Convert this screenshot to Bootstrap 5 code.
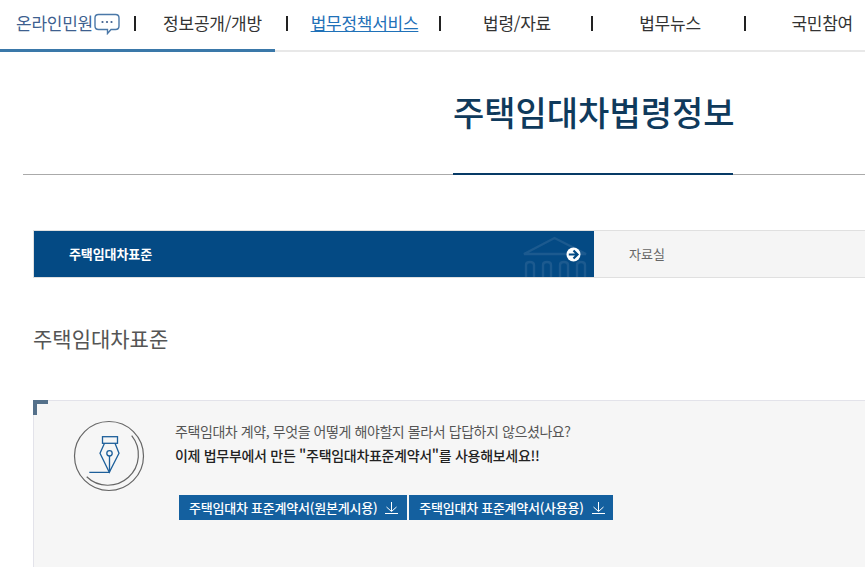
<!DOCTYPE html>
<html lang="ko">
<head>
<meta charset="utf-8">
<title>주택임대차법령정보</title>
<link href="https://cdn.jsdelivr.net/npm/bootstrap@5.3.0/dist/css/bootstrap.min.css" rel="stylesheet">
<style>
html,body{overflow:hidden;height:567px;background:#fff}
body{width:865px;font-family:"Noto Sans CJK KR","Liberation Sans",sans-serif;color:#333}
.gnav{height:52px;border-bottom:2px solid #e8e8e8;position:relative}
.gnav-list{height:46px;margin:0;padding:0;list-style:none}
.gnav-item{font-size:17px;line-height:24px;color:#333;text-decoration:none;white-space:nowrap;letter-spacing:-.25px}
.gnav-first{color:#3e5f8f;padding-left:16px;width:134px;gap:1px}
.gnav-sep{width:2px;height:15px;background:#222;flex:none}
.w-a{width:150px;justify-content:center;padding-left:3px}
.w-b{width:151px;justify-content:center;padding-left:2px}
.w-c{width:150px;justify-content:center;padding-left:2px}
.w-d{width:151px;justify-content:center;padding-left:3px}
.w-e{width:119px;justify-content:flex-end;padding-right:12px}
.gnav-on{color:#1f71b8;text-decoration:underline}
.gnav-bar{position:absolute;left:0;bottom:-2px;width:275px;height:3px;background:#3a78a9}
.title-wrap{margin-left:23px;height:123px;border-bottom:1px solid #aaa;position:relative}
.page-title{position:absolute;left:430px;top:0;width:280px;height:123px;margin:0;padding-top:36px;font-size:34px;line-height:48px;font-weight:500;color:#0f3a5c;white-space:nowrap;letter-spacing:0;border-bottom:2px solid #063a66;text-align:center}
.tab-row{margin:55px 0 0 33px;width:832px;height:48px;border-top:1px solid #e0e0e0;border-bottom:1px solid #e0e0e0;border-left:1px solid #e0e0e0}
.tab-on{width:560px;background:#044a84;color:#fff;font-size:13px;font-weight:700;padding-left:35px;position:relative;overflow:hidden;letter-spacing:-.1px}
.tab-off{flex:1;background:#f5f5f5;color:#666;font-size:13px;padding-left:35px}
.tab-bld{position:absolute;left:487px;top:4px}
.tab-arrow{position:absolute;left:532px;top:16px}
.sec-title{margin:45px 0 0 33px;font-size:21px;line-height:30px;font-weight:400;color:#555;letter-spacing:0}
.info-box{margin:47px 0 0 33px;width:832px;height:167px;background:#f6f6f6;border:1px solid #e3e3ea;border-right:0;border-bottom:0;position:relative;padding:19px 0 0 39px;gap:30px}
.box-corner{position:absolute;left:-1px;top:-1px;width:15px;height:15px;border-left:4px solid #54708a;border-top:4px solid #54708a}
.box-line1{font-size:14px;line-height:24px;color:#555;letter-spacing:-.42px;margin:0;white-space:nowrap}
.box-line2{font-size:14px;line-height:24px;color:#222;font-weight:500;letter-spacing:-.3px;margin:0;white-space:nowrap}
.dl-row{margin-top:28px;margin-left:4px;gap:2px}
.dl-btn{height:25px;background:#14609f;color:#fff;font-size:13px;border-radius:0;border:0;padding:0 9px 0 10px;gap:8px;letter-spacing:-.22px;white-space:nowrap;font-weight:500;text-decoration:none}
.dl-btn-short{padding-right:8px;letter-spacing:-.26px}
.text-col{margin-top:-1px}
</style>
</head>
<body>
<nav class="gnav">
<ul class="gnav-list d-flex align-items-center">
<li class="d-flex align-items-center"><a class="gnav-item gnav-first d-flex align-items-center" href="#">온라인민원<svg width="26" height="23" viewBox="0 0 26 23" fill="none"><path d="M4.500 2.500H21.500Q25 2.500 25 6V14Q25 17.500 21.500 17.500H17L13.500 21.500V17.500H4.500Q1 17.500 1 14V6Q1 2.500 4.500 2.500Z" stroke="#4a78a8" stroke-width="1.400"/><circle cx="8.500" cy="10" r="1.100" fill="#3e5f8f"/><circle cx="13" cy="10" r="1.100" fill="#3e5f8f"/><circle cx="17.500" cy="10" r="1.100" fill="#3e5f8f"/></svg></a></li>
<li class="gnav-sep"></li>
<li class="d-flex w-a"><a class="gnav-item" href="#">정보공개/개방</a></li>
<li class="gnav-sep"></li>
<li class="d-flex w-b"><a class="gnav-item gnav-on" href="#">법무정책서비스</a></li>
<li class="gnav-sep"></li>
<li class="d-flex w-c"><a class="gnav-item" href="#">법령/자료</a></li>
<li class="gnav-sep"></li>
<li class="d-flex w-d"><a class="gnav-item" href="#">법무뉴스</a></li>
<li class="gnav-sep"></li>
<li class="d-flex w-e"><a class="gnav-item" href="#">국민참여</a></li>
</ul>
<div class="gnav-bar"></div>
</nav>
<div class="title-wrap"><h1 class="page-title">주택임대차법령정보</h1></div>
<div class="tab-row d-flex">
<div class="tab-on d-flex align-items-center">주택임대차표준
<svg class="tab-bld" width="68" height="42" viewBox="0 0 68 42" fill="none" stroke="#1c5a8f" stroke-width="2.400"><path d="M3 19L33.500 3L65 19H3Z"/><path d="M5 42V30Q5 27 9 27Q13 27 13 30V42M22 42V30Q22 27 26 27Q30 27 30 30V42M39 42V30Q39 27 43 27Q47 27 47 30V42M56 42V30Q56 27 60 27Q64 27 64 30V42"/></svg>
<svg class="tab-arrow" width="15" height="15" viewBox="0 0 15 15"><circle cx="7.500" cy="7.500" r="7" fill="#fff"/><path d="M2.800 7.500H11M7.500 3.500L11.500 7.500L7.500 11.500" fill="none" stroke="#044a84" stroke-width="2.200"/></svg>
</div>
<div class="tab-off d-flex align-items-center">자료실</div>
</div>
<h2 class="sec-title">주택임대차표준</h2>
<div class="info-box d-flex">
<div class="box-corner"></div>
<svg width="72" height="72" viewBox="0 0 72 72" fill="none" class="flex-shrink-0">
<circle cx="36" cy="36" r="34.500" stroke="#666" stroke-width="1.200"/>
<path d="M58.700 15.700A30.500 30.500 0 0 1 13.700 56.700" stroke="#666" stroke-width="1.200"/>
<g stroke="#1d5f9a" stroke-width="1.300">
<rect x="29.500" y="16.700" width="15" height="6.600"/>
<path d="M31.500 23.300L27 33.300L36.300 52.300L46 33.300L42 23.300"/>
<circle cx="36.500" cy="33.300" r="2.700"/>
<path d="M36.500 36V52.300M16.300 52.300H36.500"/>
</g>
</svg>
<div class="text-col">
<p class="box-line1">주택임대차 계약, 무엇을 어떻게 해야할지 몰라서 답답하지 않으셨나요?</p>
<p class="box-line2">이제 법무부에서 만든 "주택임대차표준계약서"를 사용해보세요!!</p>
<div class="dl-row d-flex">
<a class="dl-btn d-flex align-items-center" href="#">주택임대차 표준계약서(원본게시용)<svg width="13" height="12" viewBox="0 0 13 12" fill="none" stroke="#fff"><path d="M6.500 0V9M1.500 5L6.500 9.500L11.500 5M0 11.500H13"/></svg></a>
<a class="dl-btn dl-btn-short d-flex align-items-center" href="#">주택임대차 표준계약서(사용용)<svg width="13" height="12" viewBox="0 0 13 12" fill="none" stroke="#fff"><path d="M6.500 0V9M1.500 5L6.500 9.500L11.500 5M0 11.500H13"/></svg></a>
</div>
</div>
</div>
</body>
</html>
